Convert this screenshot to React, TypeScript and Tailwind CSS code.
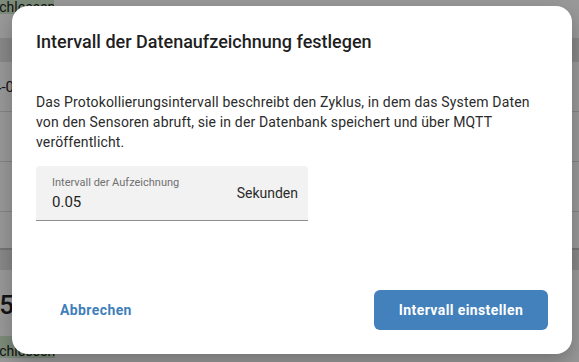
import React from "react";

const font = { fontFamily: "Roboto, 'Noto Sans', sans-serif" };

const Tail: React.FC<{ text: string; className?: string }> = ({ text, className }) => (
  <div className={`w-[14px] overflow-hidden flex justify-end whitespace-nowrap ${className ?? ""}`}>
    <span>{text}</span>
  </div>
);

const Background: React.FC = () => (
  <div className="w-full h-[362px] bg-white flex flex-col text-[#222] overflow-hidden">
    {/* top status pill */}
    <div className="h-[14px] w-[54px] bg-[#cfe8cc] rounded-br-[8px] flex items-end overflow-hidden">
      <span className="text-[14px] leading-[18px] whitespace-nowrap -ml-[25px] translate-y-[2px]">Geschlossen</span>
    </div>
    <div className="h-[24px]" />
    {/* table header */}
    <div className="h-[24px] bg-[#e3e3e3]" />
    {/* rows */}
    <div className="h-[50px] border-b border-[#dcdcdc] flex items-center">
      <Tail text="2024-0" className="text-[15px] pt-[2px]" />
    </div>
    <div className="h-[50px] border-b border-[#dcdcdc]" />
    <div className="h-[50px] border-b border-[#dcdcdc]" />
    <div className="h-[38px] border-b-2 border-[#c4c4c4]" />
    <div className="h-[20px] bg-[#e3e3e3]" />
    <div className="h-[66px] flex items-center">
      <Tail text="2015" className="text-[26px] font-medium pt-[4px]" />
    </div>
    <div className="h-[22px] w-[55px] bg-[#cfe8cc] rounded-tr-[8px] flex items-end overflow-hidden">
      <span className="text-[14px] leading-[16px] whitespace-nowrap -ml-[25px] translate-y-[1px]">Geschlossen</span>
    </div>
  </div>
);

export default function App() {
  return (
    <div className="relative w-full h-[362px] overflow-hidden" style={font}>
      <Background />
      <div className="absolute inset-0 bg-black/40 pl-[12px] pt-[6px]">
        <div className="w-[560px] h-[348px] bg-white rounded-[16px] shadow-[0_8px_20px_rgba(0,0,0,0.25)] px-6 pt-6 pb-6 flex flex-col">
          <h2 className="text-[18px] leading-6 font-medium text-[#1f1f1f]">
            Intervall der Datenaufzeichnung festlegen
          </h2>
          <p className="mt-[38px] text-[14px] leading-5 tracking-[0.15px] text-[#2b2b2b]">
            Das Protokollierungsintervall beschreibt den Zyklus, in dem das System Daten
            von den Sensoren abruft, sie in der Datenbank speichert und über MQTT
            veröffentlicht.
          </p>
          <div className="mt-[14px] w-[272px] h-[55px] bg-[#f2f2f2] rounded-t-[4px] border-b border-[#8e8e8e] flex items-center pl-4 pr-[10px]">
            <div className="flex-1 flex flex-col pt-[2px]">
              <span className="text-[11px] leading-[14px] text-[#707070]">Intervall der Aufzeichnung</span>
              <span className="text-[15px] leading-[20px] text-[#1f1f1f] mt-[2px]">0.05</span>
            </div>
            <span className="text-[14px] text-[#2b2b2b]">Sekunden</span>
          </div>
          <div className="flex-1" />
          <div className="flex items-center justify-between">
            <button className="h-10 px-6 text-[14px] font-bold text-[#3f7fbb] tracking-[0.4px]">
              Abbrechen
            </button>
            <button className="h-10 w-[174px] rounded-[6px] bg-[#4281bb] text-white text-[14px] font-bold tracking-[0.4px]">
              Intervall einstellen
            </button>
          </div>
        </div>
      </div>
    </div>
  );
}
